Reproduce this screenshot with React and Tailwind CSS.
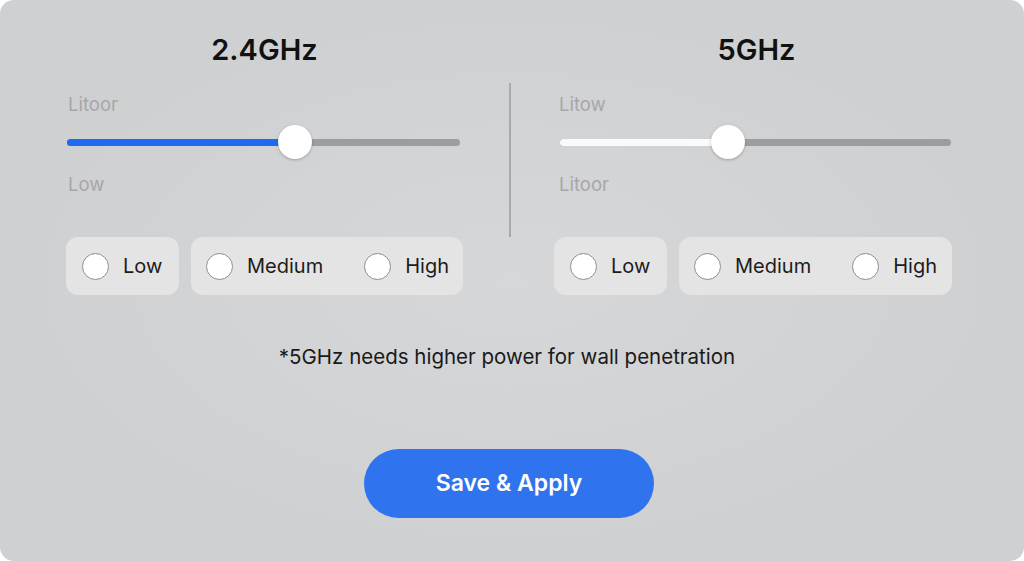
import React from "react";

function Radio({ label }) {
  return (
    <div className="flex items-center gap-[14px]">
      <span className="block w-[27px] h-[27px] rounded-full bg-white border-[1.5px] border-[#8e8e8e]" />
      <span className="text-[20px] leading-[26px] text-[#1c1c1c]">{label}</span>
    </div>
  );
}

function Slider({ pct, fill, width }) {
  return (
    <div className="relative h-[34px] flex items-center" style={{ width }}>
      <div className="w-full h-[7px] rounded-full bg-[#9c9da1]" />
      <div
        className="absolute left-0 top-[13.5px] h-[7px] rounded-full"
        style={{ width: `${pct}%`, background: fill }}
      />
      <div
        className="absolute top-0 w-[34px] h-[34px] rounded-full bg-white shadow-[0_1px_3px_rgba(0,0,0,0.25)]"
        style={{ left: `calc(${pct}% - 17px)` }}
      />
    </div>
  );
}

function Column({ top, bottom, pct, fill, sliderW, inset, labelInset, lowW, medW, medGap }) {
  return (
    <div className="flex flex-col pt-[9px]">
      <div className="text-[18.5px] leading-[24px] text-[#a6a7a9]" style={{ paddingLeft: labelInset }}>{top}</div>
      <div className="mt-[9px]" style={{ paddingLeft: inset }}>
        <Slider pct={pct} fill={fill} width={sliderW} />
      </div>
      <div className="mt-[13px] text-[18.5px] leading-[24px] text-[#a6a7a9]" style={{ paddingLeft: labelInset }}>{bottom}</div>
      <div className="mt-[41px] flex gap-[12px]">
        <div
          className="h-[58px] rounded-[12px] bg-[#e4e4e5] flex items-center pl-[16px]"
          style={{ width: lowW }}
        >
          <Radio label="Low" />
        </div>
        <div
          className="h-[58px] rounded-[12px] bg-[#e4e4e5] flex items-center pl-[15px]"
          style={{ width: medW, gap: medGap }}
        >
          <Radio label="Medium" />
          <Radio label="High" />
        </div>
      </div>
    </div>
  );
}

export default function App() {
  return (
    <div className="w-[1024px] h-[561px] bg-white" style={{ fontFamily: "Inter, 'Noto Sans', sans-serif" }}>
      <div className="w-full h-full rounded-[14px] bg-[#d0d1d2] bg-[radial-gradient(ellipse_at_center,#d6d7d8_0%,#cfd0d1_70%)] flex flex-col">
        <div className="flex pt-[33px] pl-[66px]">
          <div className="w-[397px] text-center text-[29px] leading-[34px] font-semibold text-[#111]">2.4GHz</div>
          <div className="w-[91px]" />
          <div className="w-[399px] text-center text-[29px] leading-[34px] font-semibold text-[#111] pl-[6px]">5GHz</div>
        </div>
        <div className="flex pl-[66px] mt-[16px]">
          <div className="w-[397px]">
            <Column top="Litoor" bottom="Low" pct={58} fill="#1f6bf0" sliderW={393} inset={1} labelInset={2} lowW={113} medW={272} medGap={41} />
          </div>
          <div className="w-[91px] flex justify-center">
            <div className="w-[1.5px] h-[154px] bg-[#a9aaac] ml-[3px]" />
          </div>
          <div className="w-[399px]">
            <Column top="Litow" bottom="Litoor" pct={43} fill="#fafafa" sliderW={391} inset={6} labelInset={5} lowW={113} medW={273} medGap={41} />
          </div>
        </div>
        <div className="mt-[48px] text-center text-[20.5px] leading-[28px] text-[#1a1a1a] pr-[10px]">
          *5GHz needs higher power for wall penetration
        </div>
        <div className="mt-[78px] flex justify-center pr-[6px]">
          <button className="w-[290px] h-[69px] rounded-full bg-[#2f74ee] text-white text-[23px] font-semibold">
            Save &amp; Apply
          </button>
        </div>
      </div>
    </div>
  );
}
